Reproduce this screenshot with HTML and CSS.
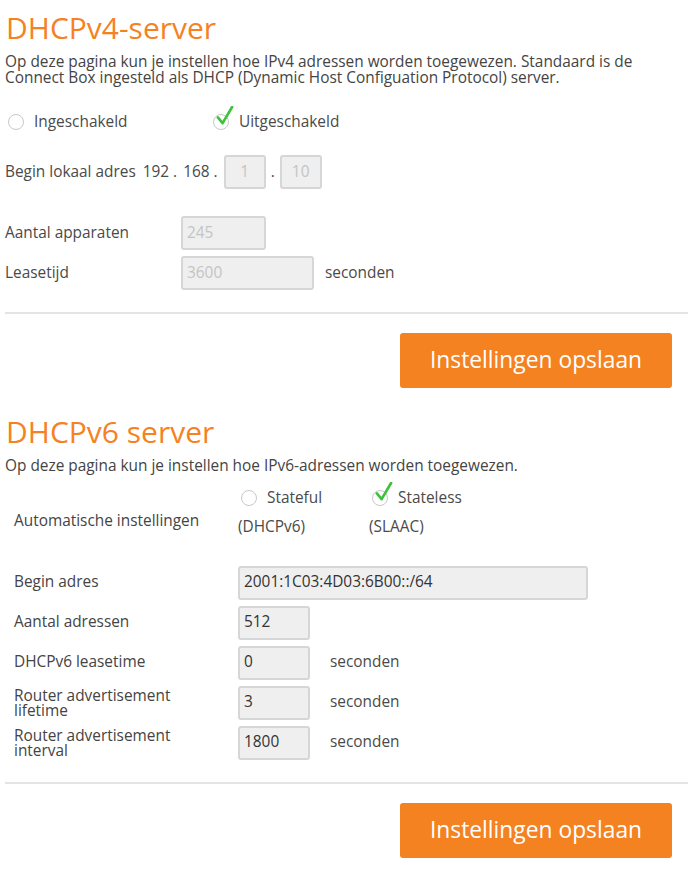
FILE: index.html
```html
<!DOCTYPE html>
<html lang="nl">
<head>
	<meta charset="UTF-8">
	<title>DHCP</title>
	<link rel="stylesheet" href="styles.css">
</head>
<body>
	<div class="page">
		<!-- DHCPv4 -->
		<section class="block v4">
			<h1>DHCPv4-server</h1>
			<p class="intro">Op deze pagina kun je instellen hoe IPv4 adressen worden toegewezen. Standaard is de Connect Box ingesteld als DHCP (Dynamic Host Configuation Protocol) server.</p>
			<div class="radios">
				<label class="radio"><span class="dot"></span>Ingeschakeld</label>
				<label class="radio on"><span class="dot"><svg viewBox="0 0 20 22"><path d="M3 12 L8 18 L18 1" fill="none" stroke="#3fc23a" stroke-width="2.8" stroke-linecap="round" stroke-linejoin="round"/></svg></span>Uitgeschakeld</label>
			</div>
			<div class="addr">
				<span class="lbl">Begin lokaal adres</span>
				<span class="oct">192 .</span>
				<span class="oct">168 .</span>
				<span class="field tiny">1</span>
				<span class="oct dot2">.</span>
				<span class="field tiny">10</span>
			</div>
			<div class="row first">
				<span class="lbl">Aantal apparaten</span>
				<span class="field mid">245</span>
			</div>
			<div class="row">
				<span class="lbl">Leasetijd</span>
				<span class="field wide">3600</span>
				<span class="unit">seconden</span>
			</div>
			<hr>
			<div class="actions"><a href="#" class="btn">Instellingen opslaan</a></div>
		</section>

		<!-- DHCPv6 -->
		<section class="block v6">
			<h1>DHCPv6 server</h1>
			<p class="intro">Op deze pagina kun je instellen hoe IPv6-adressen worden toegewezen.</p>
			<div class="auto">
				<span class="lbl">Automatische instellingen</span>
				<div class="opt">
					<label class="radio"><span class="dot"></span>Stateful</label>
					<span class="sub">(DHCPv6)</span>
				</div>
				<div class="opt">
					<label class="radio on"><span class="dot"><svg viewBox="0 0 20 22"><path d="M3 12 L8 18 L18 1" fill="none" stroke="#3fc23a" stroke-width="2.8" stroke-linecap="round" stroke-linejoin="round"/></svg></span>Stateless</label>
					<span class="sub">(SLAAC)</span>
				</div>
			</div>
			<div class="row start">
				<span class="lbl">Begin adres</span>
				<span class="field long">2001:1C03:4D03:6B00::/64</span>
			</div>
			<div class="row">
				<span class="lbl">Aantal adressen</span>
				<span class="field">512</span>
			</div>
			<div class="row">
				<span class="lbl">DHCPv6 leasetime</span>
				<span class="field">0</span>
				<span class="unit">seconden</span>
			</div>
			<div class="row">
				<span class="lbl two">Router advertisement lifetime</span>
				<span class="field">3</span>
				<span class="unit">seconden</span>
			</div>
			<div class="row">
				<span class="lbl two">Router advertisement interval</span>
				<span class="field">1800</span>
				<span class="unit">seconden</span>
			</div>
			<hr>
			<div class="actions"><a href="#" class="btn">Instellingen opslaan</a></div>
		</section>
	</div>
</body>
</html>
```

FILE: styles.css
```css
body{margin:0;background:#fff;color:#4a4a4a;font:15.4px/1.1 "Open Sans","Liberation Sans",sans-serif;}
.page{padding:0 5px;}
h1{margin:0;color:#f5821f;font-weight:400;font-size:30px;line-height:50px;padding:3px 0 0 1px;}
.intro{margin:1px 0 0;line-height:16px;color:#444;}

.radio{display:flex;align-items:center;}
.dot{position:relative;width:14px;height:14px;border:1.5px solid #c8c8c8;border-radius:50%;margin-right:10px;flex:none;}
.dot svg{position:absolute;left:1px;top:-9px;width:19px;height:21px;}

.v4 .radios{display:flex;margin:26px 0 0 3px;height:20px;}
.v4 .radios .radio:first-child{width:205px;}

.field{display:flex;align-items:center;box-sizing:border-box;height:34px;width:72px;padding:0 4px;background:#efefef;border:2px solid #d6d6d6;border-radius:3px;color:#333;}
.v4 .field{color:#c4c4c4;}
.field.tiny{width:42px;justify-content:center;}
.field.mid{width:85px;}
.field.wide{width:133px;}
.field.long{width:350px;}

.addr{display:flex;align-items:center;margin-top:23px;}
.addr .lbl{margin-right:7px;}
.addr .oct{margin-right:6px;}
.addr .oct.dot2{margin:0 5px 0 5px;}

.row{display:flex;align-items:center;margin-top:6px;}
.row.first{margin-top:27px;}
.v4 .row .lbl{width:176px;}
.unit{margin-left:11px;}
.v6 .unit{margin-left:20px;}

hr{border:0;border-top:2px solid #e4e4e4;margin:22px 0 0;}

.actions{display:flex;justify-content:flex-end;padding:19px 16px 0 0;}
.btn{display:block;width:272px;height:55px;line-height:53px;text-align:center;background:#f58220;border-radius:3px;color:#fff;text-decoration:none;font-size:22.8px;}

.v6{margin-top:16px;}
.v6 .intro{margin-top:1px;}
.v6 .lbl{width:224px;padding-left:9px;color:#444;}
.v6 .lbl.two{width:180px;padding-right:44px;line-height:15px;}
.auto{display:flex;align-items:flex-start;margin-top:14px;}
.auto .lbl{margin-top:25px;}
.opt{display:flex;flex-direction:column;width:131px;}
.opt .radio{height:20px;margin-left:3px;}
.opt .sub{margin-top:11px;}
.v6 .row.start{margin-top:30px;}
.v6 hr{margin-top:22px;}
.v6 .actions{padding-top:19px;}
```
